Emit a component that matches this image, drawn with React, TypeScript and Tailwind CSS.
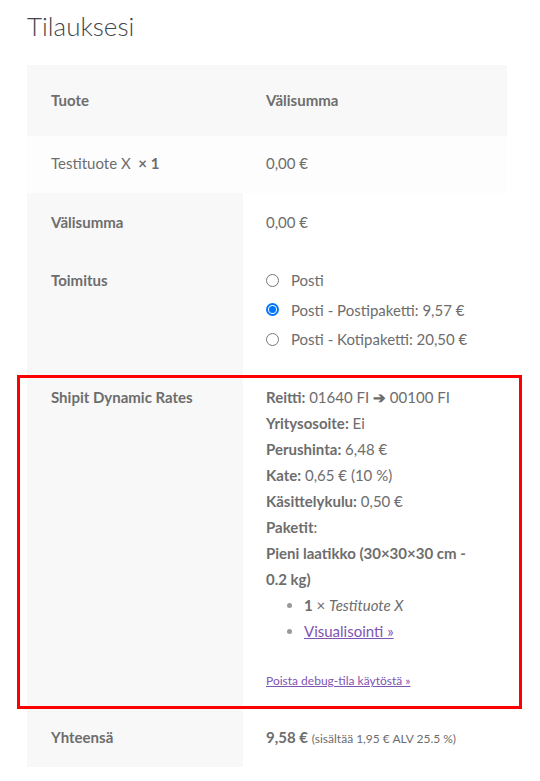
import React from 'react';

const Radio = ({ checked, label }: { checked?: boolean; label: string }) => (
  <label className="flex items-center gap-[12px] leading-[26px]">
    {checked ? (
      <span className="flex h-[13px] w-[13px] items-center justify-center rounded-full border-2 border-[#0075ff] bg-white">
        <span className="h-[7px] w-[7px] rounded-full bg-[#0075ff]" />
      </span>
    ) : (
      <span className="h-[13px] w-[13px] rounded-full border border-[#767676] bg-white" />
    )}
    <span>{label}</span>
  </label>
);

const Label = ({ children }: { children: React.ReactNode }) => (
  <strong className="font-bold text-[#6d6d6d]">{children}</strong>
);

export default function App() {
  return (
    <div className="min-h-screen bg-white font-['Lato',sans-serif] text-[15px] text-[#6d6d6d]">
      <div className="px-[27px] pt-[9px]">
        <h3 className="text-[26px] font-light leading-[34px] text-[#43454b]">Tilauksesi</h3>

        <div className="mt-[22px] w-[480px] leading-[26px]">
          {/* header */}
          <div className="grid grid-cols-[216px_264px] bg-[#f8f8f8] font-bold">
            <div className="pl-[24px] pt-[22px] pb-[23px]">Tuote</div>
            <div className="pl-[23px] pt-[22px] pb-[23px]">Välisumma</div>
          </div>

          {/* product row */}
          <div className="grid grid-cols-[216px_264px] bg-[#fdfdfd]">
            <div className="pl-[24px] pt-[14px] pb-[17px]">
              Testituote X&nbsp; <strong className="font-bold">× 1</strong>
            </div>
            <div className="pl-[23px] pt-[14px] pb-[17px]">0,00 €</div>
          </div>

          {/* subtotal */}
          <div className="grid grid-cols-[216px_264px]">
            <div className="bg-[#f8f8f8] pl-[24px] py-[16px] font-bold">Välisumma</div>
            <div className="pl-[23px] py-[16px]">0,00 €</div>
          </div>

          {/* shipping */}
          <div className="grid grid-cols-[216px_264px]">
            <div className="bg-[#f8f8f8] pl-[24px] py-[16px] font-bold">Toimitus</div>
            <div className="flex flex-col gap-[3.5px] pl-[23px] py-[16px]">
              <Radio label="Posti" />
              <Radio checked label="Posti - Postipaketti: 9,57 €" />
              <Radio label="Posti - Kotipaketti: 20,50 €" />
            </div>
          </div>

          {/* debug rates */}
          <div className="relative grid grid-cols-[216px_264px]">
            <div className="bg-[#f8f8f8] pl-[24px] py-[16px] font-bold">Shipit Dynamic Rates</div>
            <div className="pl-[23px] py-[16px]">
              <div><Label>Reitti:</Label> 01640 FI <span className="font-bold">➔</span> 00100 FI</div>
              <div><Label>Yritysosoite:</Label> Ei</div>
              <div><Label>Perushinta:</Label> 6,48 €</div>
              <div><Label>Kate:</Label> 0,65 € (10 %)</div>
              <div><Label>Käsittelykulu:</Label> 0,50 €</div>
              <div><Label>Paketit</Label>:</div>
              <div className="font-bold">
                Pieni laatikko (30×30×30 cm -<br />0.2 kg)
              </div>
              <ul className="list-disc pl-[38px] marker:text-[#999]">
                <li>
                  <strong className="font-bold">1</strong> × <em>Testituote X</em>
                </li>
                <li>
                  <a href="#" className="text-[#7f54b3] underline">Visualisointi »</a>
                </li>
              </ul>
              <p className="mt-[26px] text-[12px] leading-[22px]">
                <a href="#" className="text-[#7f54b3] underline">Poista debug-tila käytöstä »</a>
              </p>
            </div>
            <div className="pointer-events-none absolute -left-[10px] top-[7px] -right-[15px] -bottom-[1px] border-[3px] border-[#ff0000]" />
          </div>

          {/* total */}
          <div className="grid grid-cols-[216px_264px]">
            <div className="bg-[#f8f8f8] pl-[24px] pt-[16px] pb-[15px] font-bold">Yhteensä</div>
            <div className="pl-[23px] pt-[16px] pb-[15px]">
              <strong className="font-bold">9,58 €</strong>{' '}
              <small className="text-[12px]">(sisältää 1,95 € ALV 25.5 %)</small>
            </div>
          </div>
        </div>
      </div>
    </div>
  );
}
